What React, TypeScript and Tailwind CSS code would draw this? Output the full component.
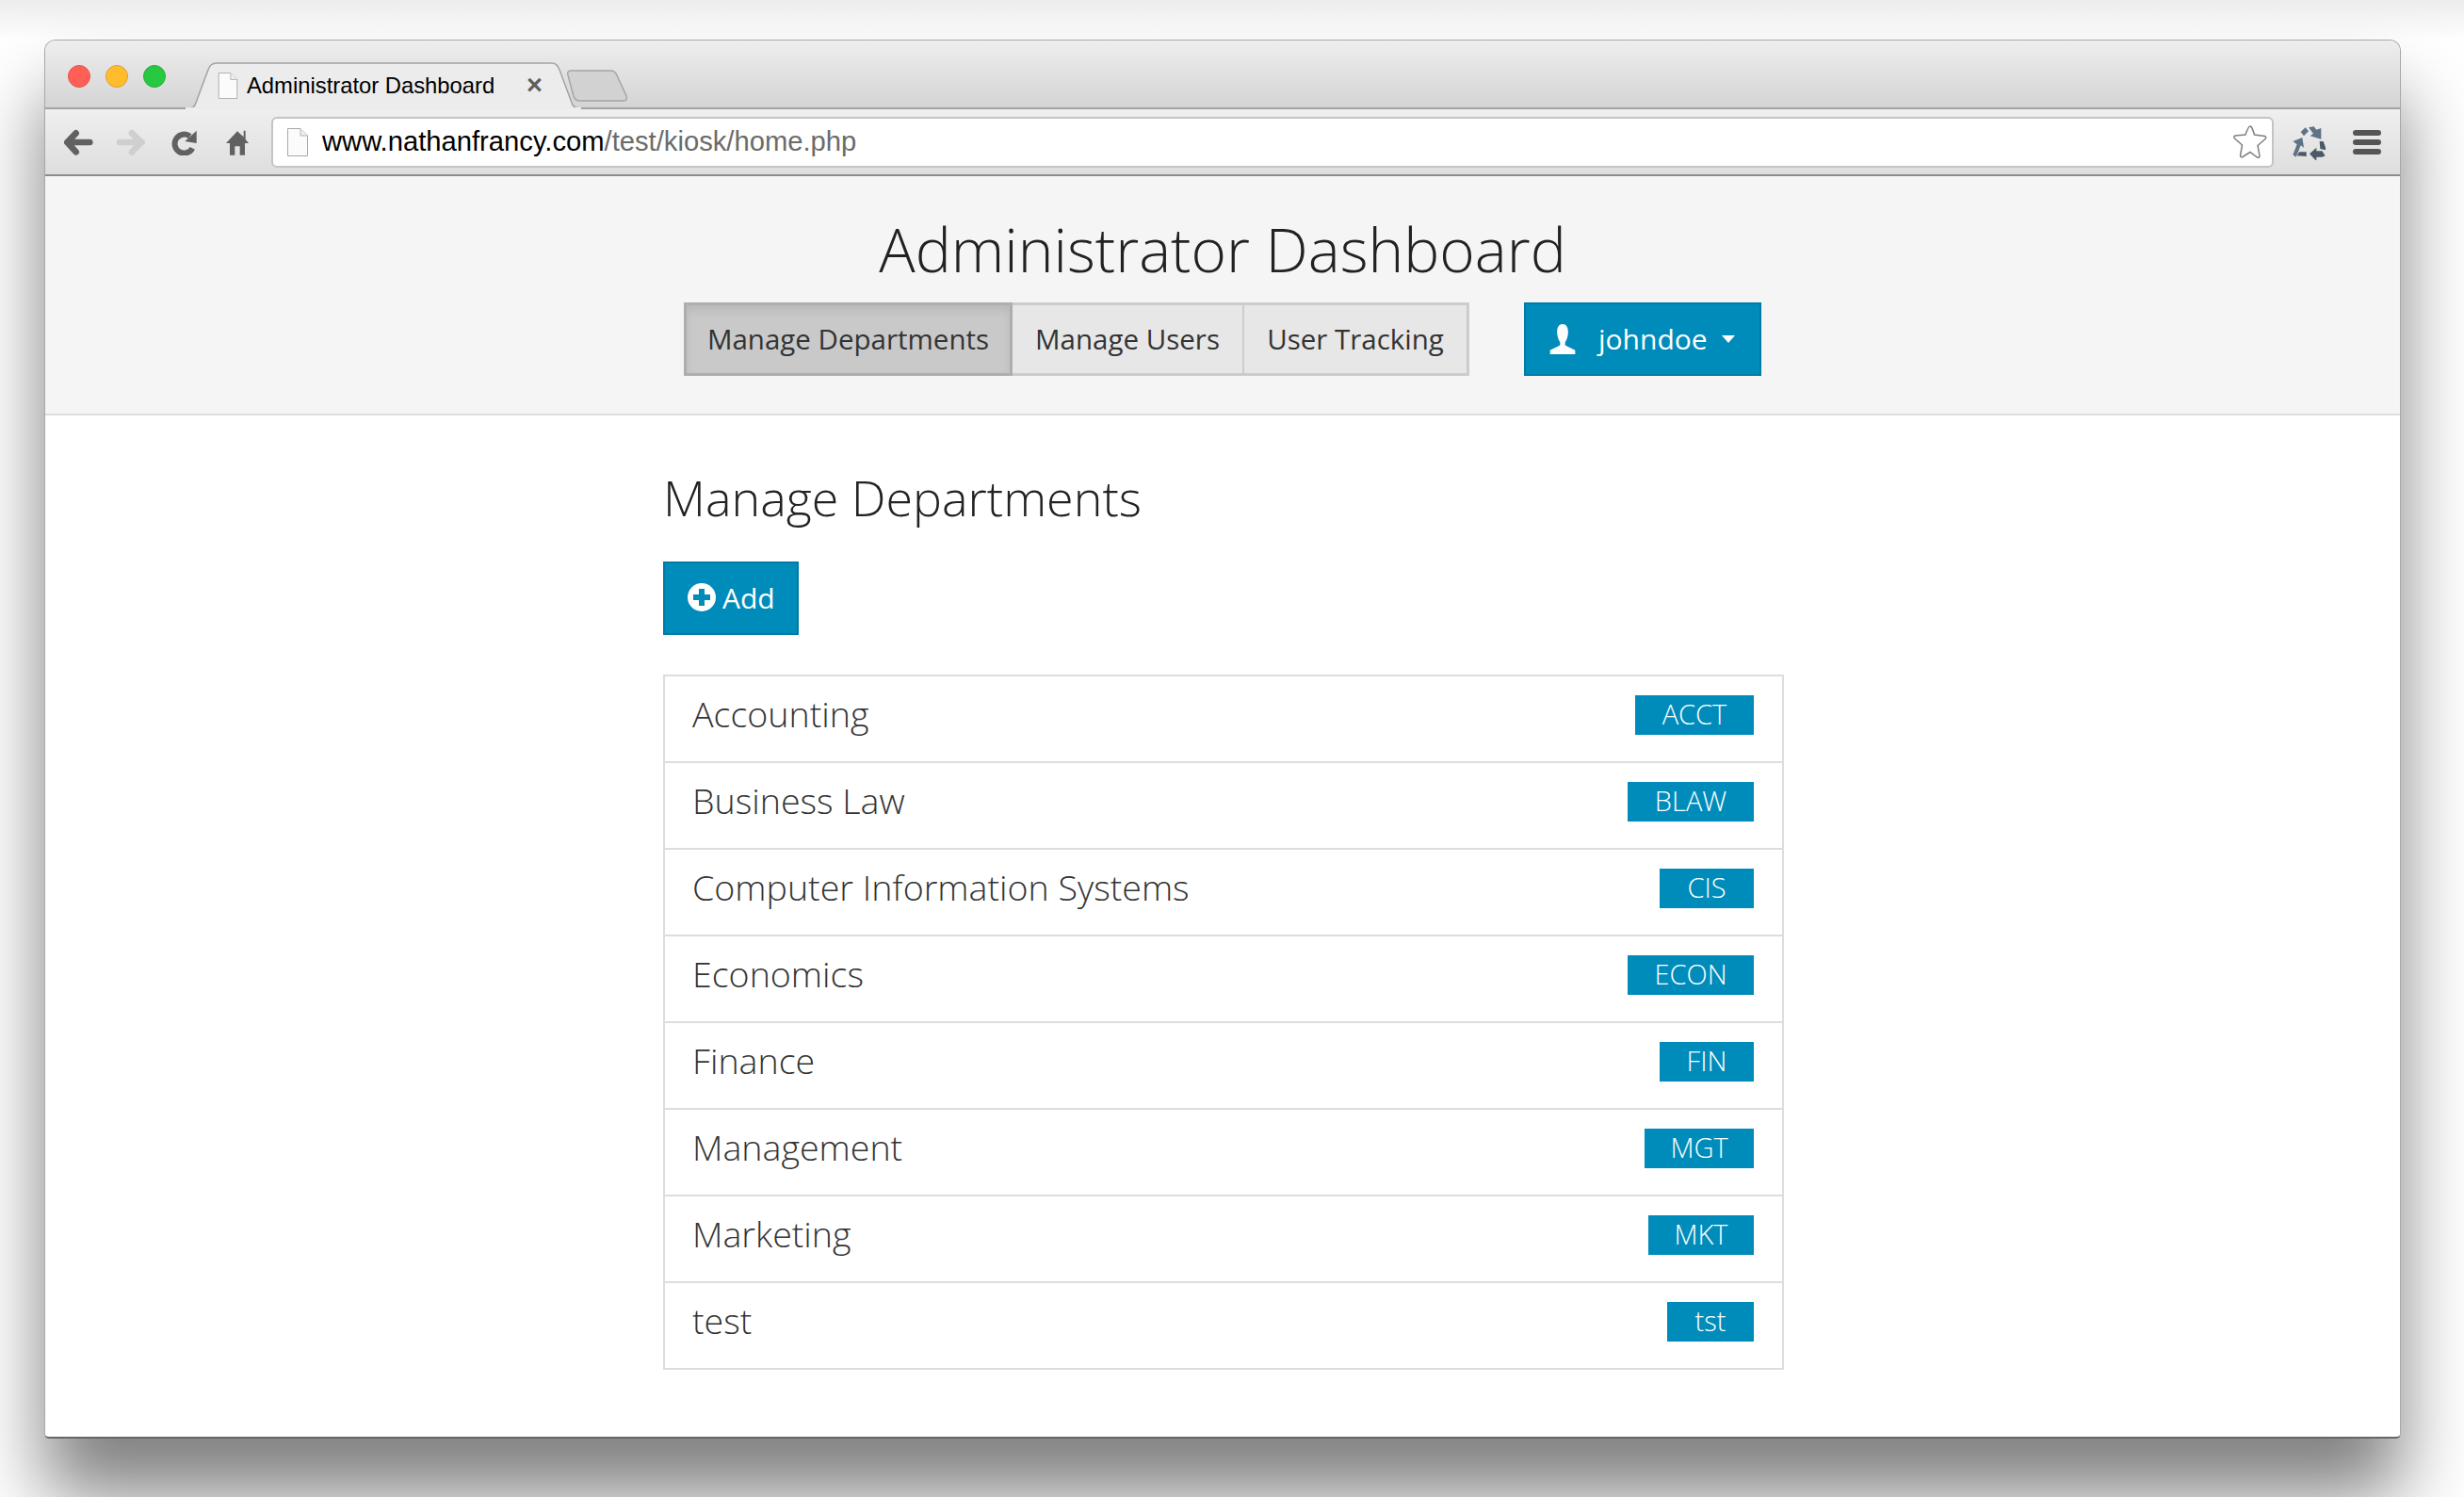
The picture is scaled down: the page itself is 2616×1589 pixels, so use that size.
const departments = [
  { name: "Accounting", code: "ACCT", w: "w-[126px]" },
  { name: "Business Law", code: "BLAW", w: "w-[134px]" },
  { name: "Computer Information Systems", code: "CIS", w: "w-[100px]" },
  { name: "Economics", code: "ECON", w: "w-[134px]" },
  { name: "Finance", code: "FIN", w: "w-[100px]" },
  { name: "Management", code: "MGT", w: "w-[116px]" },
  { name: "Marketing", code: "MKT", w: "w-[112px]" },
  { name: "test", code: "tst", w: "w-[92px]" },
];

function PageIcon({ className }: { className: string }) {
  return (
    <svg viewBox="0 0 22 30" className={className}>
      <path d="M.5.5H14L21.5 8V29.5H.5Z" fill="#fbfbfb" stroke="#a9a9a9" />
      <path d="M14 .5V8H21.5" fill="#eee" stroke="#b5b5b5" />
    </svg>
  );
}

function RecycleIcon() {
  return (
    <svg viewBox="21 18 108 114" className="ml-[19px] h-[38px] w-[36px]">
      <path d="M50 42 65 28l10 12-15 15Z" fill="#5f7386" />
      <path d="M75 28 92 25l8 10 15-5v35L80 55l10-8Z" fill="#5f7386" />
      <path d="M25 72 55 60l5 32-10-7-15 37-10-7 13-33Z" fill="#5f7386" />
      <path d="M38 118 45 106h23v14Z" fill="#4c5a68" />
      <path d="M78 112 100 92v11h18l10 15-10 4h-18v13Z" fill="#4c5a68" />
      <path d="M110 72h12l10 28-20-4Z" fill="#4c5a68" />
    </svg>
  );
}

function Toolbar() {
  return (
    <div className="flex h-[71px] items-center border-b-2 border-[#8c8c8c] bg-gradient-to-b from-[#efefef] to-[#dedede]">
      <svg viewBox="24 33 96 84" className="ml-[20px] h-[28px] w-[32px]">
        <path d="M36 75H106M62 46 34 75l28 31" fill="none" stroke="#616161" strokeWidth="20" strokeLinecap="round" strokeLinejoin="round" />
      </svg>
      <svg viewBox="192 33 96 84" className="ml-[24px] h-[28px] w-[32px]">
        <path d="M272 75H200M240 46l30 29-30 31" fill="none" stroke="#cfcfcf" strokeWidth="20" strokeLinecap="round" strokeLinejoin="round" />
      </svg>
      <svg viewBox="365 33 84 84" className="ml-[26px] h-[28px] w-[28px]">
        <path d="M432 94A30 30 0 1 1 424 56" fill="none" stroke="#616161" strokeWidth="18" />
        <path d="M445 38v40l-37-6Z" fill="#616161" />
      </svg>
      <svg viewBox="540 33 75 84" className="ml-[30px] h-[28px] w-[25px]">
        <path d="M576 40 540 78h12v38h16V88h16v28h16V78h12l-10-12V38h-6v20Z" fill="#616161" />
      </svg>
      <div className="ml-[23px] flex h-[54px] w-[2126px] items-center rounded-md border-2 border-[#c4c4c4] bg-white pl-[15px] pr-[5px]">
        <PageIcon className="h-[30px] w-[22px]" />
        <div className="ml-[15px] flex-1 font-['Liberation_Sans',sans-serif] text-[29.2px] leading-none text-black">
          www.nathanfrancy.com<span className="text-[#6b6b6b]">/test/kiosk/home.php</span>
        </div>
        <svg viewBox="0 0 36 36" className="h-[36px] w-[36px] -translate-y-px">
          <path
            d="M18 2c1.500 0 2 1.500 4.500 9l11 1.500c1.500.5 1.500 2 .5 3l-8 7 2 11c0 1.500-1 2-2.500 1.500L18 29.500l-8 5c-1.500.5-2.500 0-2.500-1.500l2-11-8-7c-1-1-1-2.500.5-3L13 11c2.500-7.500 3.500-9 5-9Z"
            fill="#fff"
            stroke="#808080"
            strokeWidth="1.500"
          />
        </svg>
      </div>
      <RecycleIcon />
      <div className="ml-[29px] flex w-[30px] flex-col gap-[4px]">
        <div className="h-[6px] rounded-full bg-[#555555]" />
        <div className="h-[6px] rounded-full bg-[#555555]" />
        <div className="h-[6px] rounded-full bg-[#555555]" />
      </div>
    </div>
  );
}

function TabStrip() {
  return (
    <div className="relative h-[73px] rounded-t-[12px] border-b-2 border-[#a3a3a3] bg-gradient-to-b from-[#eeeeee] to-[#d4d4d4]">
      <div className="flex items-center gap-[16px] pl-[24px] pt-[26px]">
        <div className="h-[24px] w-[24px] rounded-full border border-[#e5534c] bg-[#ff5f57]" />
        <div className="h-[24px] w-[24px] rounded-full border border-[#dfa029] bg-[#ffbd2e]" />
        <div className="h-[24px] w-[24px] rounded-full border border-[#1fb034] bg-[#28c940]" />
      </div>
      <svg viewBox="0 0 425 50" className="absolute left-[147px] top-[23px] h-[50px] w-[425px]">
        <path
          d="M0 49h6c4 0 6-2 7-6L26 8c1.500-5 4-7 9-7h355c5 0 7 2 9 7l13 35c1 4 4 6 8 6h5"
          fill="#ececec"
          stroke="#a3a3a3"
          strokeWidth="1.500"
        />
        <rect x="2" y="48" width="420" height="3" fill="#ececec" />
      </svg>
      <svg viewBox="0 0 66 34" className="absolute left-[553px] top-[31px] h-[34px] w-[66px]">
        <path
          d="M2 6c-1-3 0-5 3-5h42c4 0 6 2 7 5l10 22c1 3 0 5-3 5H15c-4 0-6-2-7-5Z"
          fill="#d2d2d2"
          stroke="#a5a5a5"
          strokeWidth="1.500"
        />
      </svg>
      <PageIcon className="absolute left-[183px] top-[34px] h-[28px] w-[22px]" />
      <span className="absolute left-[214px] top-[34px] font-['Liberation_Sans',sans-serif] text-[23.8px] leading-[27px] text-black">
        Administrator Dashboard
      </span>
      <span className="absolute left-[511px] top-[34px] font-['Liberation_Sans',sans-serif] text-[29px] font-bold leading-[27px] text-[#5f5f5f]">
        ×
      </span>
    </div>
  );
}

function Header() {
  return (
    <div className="flex h-[254px] flex-col items-center border-b-2 border-[#dddddd] bg-[#f5f5f5]">
      <h1 className="mt-[35px] text-[64px] font-light leading-[86px] text-[#222222]">Administrator Dashboard</h1>
      <div className="mt-[13px] flex items-center gap-[58px]">
        <div className="flex text-[29.5px] leading-none text-[#333333]">
          <div className="flex h-[78px] w-[349px] items-center justify-center border-[3px] border-[#aeaeae] bg-[#c9c9c9] shadow-[inset_0_6px_10px_rgba(0,0,0,0.08)]">
            Manage Departments
          </div>
          <div className="flex h-[78px] w-[246px] items-center justify-center border-y-[3px] border-r-[2px] border-[#cccccc] bg-[#e7e7e7]">
            Manage Users
          </div>
          <div className="flex h-[78px] w-[239px] items-center justify-center border-y-[3px] border-r-[3px] border-[#cccccc] bg-[#e7e7e7]">
            User Tracking
          </div>
        </div>
        <div className="flex h-[78px] w-[252px] items-center border-2 border-[#007ba5] bg-[#008cba] pl-[24px] text-[30px] leading-none text-white">
          <svg viewBox="0 0 30 30" className="h-[32px] w-[32px] -translate-x-px">
            <path d="M15 0c3.500 0 5.500 3 5.500 8 0 4-1.500 8-3 10v3l10 5v4H2.500v-4l10-5v-3C11 16 9.500 12 9.500 8c0-5 2-8 5.500-8Z" fill="#fff" />
          </svg>
          <span className="ml-[21px]">johndoe</span>
          <svg viewBox="0 0 14 8" className="ml-[15px] h-[8px] w-[14px]">
            <path d="M0 0h14L7 8Z" fill="#fff" />
          </svg>
        </div>
      </div>
    </div>
  );
}

function DepartmentList() {
  return (
    <div className="ml-[656px] flex w-[1190px] flex-col">
      <h2 className="mt-[50px] text-[52px] font-light leading-[74px] text-[#222222]">Manage Departments</h2>
      <div className="mt-[31px] flex h-[78px] w-[144px] items-center border-2 border-[#007ba5] bg-[#008cba] pl-[24px] text-[30px] leading-none text-white">
        <svg viewBox="0 0 30 30" className="h-[30px] w-[30px] -translate-y-px">
          <circle cx="15" cy="15" r="15" fill="#fff" />
          <path d="M12 6h6v6h6v6h-6v6h-6v-6H6v-6h6Z" fill="#008cba" />
        </svg>
        <span className="ml-[7px]">Add</span>
      </div>
      <div className="mt-[42px] border-2 border-b-0 border-[#dddddd]">
        {departments.map((d) => (
          <div key={d.code} className="flex h-[92px] items-center justify-between border-b-2 border-[#dddddd] pb-[8px] pl-[29px] pr-[30px]">
            <span className="-mt-[3px] text-[37.6px] font-light leading-none text-[#333333]">{d.name}</span>
            <span className={`flex h-[42px] items-center justify-center bg-[#008cba] pb-[4px] text-[29px] font-light leading-none text-white ${d.w}`}>
              {d.code}
            </span>
          </div>
        ))}
      </div>
    </div>
  );
}

export default function App() {
  return (
    <div className="h-[1589px] w-[2616px] overflow-hidden bg-white font-['Open_Sans',sans-serif]">
      <div className="h-[42px] bg-gradient-to-b from-[#ececec] to-white" />
      <div className="ml-[47px] h-[1485px] w-[2502px] rounded-t-[12px] rounded-b-[5px] border border-b-2 border-[#a8a8a8] border-b-[#666666] bg-white shadow-[0_60px_80px_rgba(0,0,0,0.5)]">
        <TabStrip />
        <Toolbar />
        <Header />
        <DepartmentList />
      </div>
    </div>
  );
}
